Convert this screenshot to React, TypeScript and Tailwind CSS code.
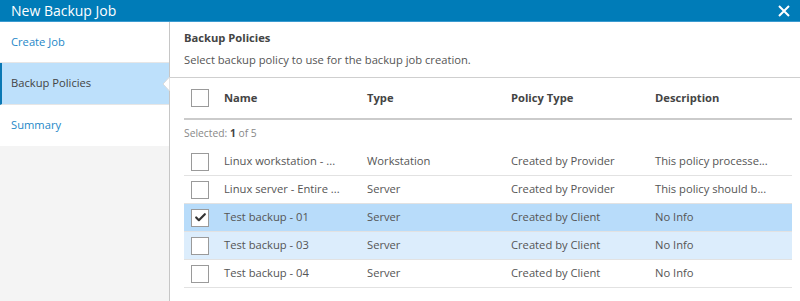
import { Check } from "lucide-react";

const rows = [
  { name: "Linux workstation - ...", type: "Workstation", policy: "Created by Provider", desc: "This policy processe...", state: "" },
  { name: "Linux server - Entire ...", type: "Server", policy: "Created by Provider", desc: "This policy should b...", state: "" },
  { name: "Test backup - 01", type: "Server", policy: "Created by Client", desc: "No Info", state: "selected" },
  { name: "Test backup - 03", type: "Server", policy: "Created by Client", desc: "No Info", state: "hover" },
  { name: "Test backup - 04", type: "Server", policy: "Created by Client", desc: "No Info", state: "" },
];

function Checkbox({ checked = false }: { checked?: boolean }) {
  return (
    <span className="flex h-[18px] w-[18px] items-center justify-center border border-[#9a9a9a] bg-white">
      {checked && <Check size={13} strokeWidth={4} className="text-[#333]" />}
    </span>
  );
}

export default function App() {
  return (
    <div className="flex h-[301px] w-[800px] flex-col overflow-hidden bg-white font-['Open_Sans',sans-serif] text-[11.2px] text-[#555]">
      <div className="flex h-[22px] shrink-0 items-center justify-between border-b border-[#3a9ad0] bg-[#007cb8] pl-[11px] pr-[10px] text-[14px] text-white">
        <span>New Backup Job</span>
        <svg width="12" height="12" viewBox="0 0 12 12" className="mt-[1px]">
          <path d="M1 1L11 11M11 1L1 11" stroke="white" strokeWidth="2" />
        </svg>
      </div>

      <div className="flex flex-1">
        <div className="relative w-[170px] shrink-0 border-r border-[#c6c6c6] bg-[#f4f4f4]">
          <div className="flex h-[41px] items-center border-b border-[#e6e6e6] bg-white pl-[11px] text-[#1e88c8]">Create Job</div>
          <div className="flex h-[42px] items-center border-b border-[#e6e6e6] border-l-2 border-l-[#0a78b4] bg-[#bde0fb] pl-[9px] text-[#444]">Backup Policies</div>
          <div className="flex h-[41px] items-center bg-white pl-[11px] text-[#1e88c8]">Summary</div>
          <svg width="8" height="14" viewBox="0 0 8 14" className="absolute right-[-1px] top-[55px]">
            <path d="M7.5 0L1 7L7.5 14Z" fill="white" />
            <path d="M7.5 0L1 7L7.5 14" fill="none" stroke="#dadada" strokeWidth="1" />
          </svg>
        </div>

        <div className="flex flex-1 flex-col">
          <div className="flex h-[56px] flex-col justify-center gap-[5px] border-b border-[#cfcfcf] pl-[14px] pb-[1px]">
            <div className="font-bold text-[#444]">Backup Policies</div>
            <div>Select backup policy to use for the backup job creation.</div>
          </div>

          <div className="pl-[14px] pr-[8px]">
            <div className="flex h-[42px] items-center border-b-2 border-[#cbcbcb] font-bold text-[#444]">
              <div className="w-[40px] pl-[7px]"><Checkbox /></div>
              <div className="w-[143px]">Name</div>
              <div className="w-[144px]">Type</div>
              <div className="w-[144px]">Policy Type</div>
              <div className="flex-1">Description</div>
            </div>
            <div className="flex h-[28px] items-center text-[10.3px] text-[#888]">
              Selected:&nbsp;<b className="text-[#444]">1</b>&nbsp;of 5
            </div>
            {rows.map((r) => (
              <div
                key={r.name}
                className={`flex h-[28px] items-center border-b border-[#e2e2e2] ${
                  r.state === "selected" ? "bg-[#b8dcfa]" : r.state === "hover" ? "bg-[#dcedfc]" : "bg-white"
                }`}
              >
                <div className="w-[40px] pl-[7px]"><Checkbox checked={r.state === "selected"} /></div>
                <div className="w-[143px]">{r.name}</div>
                <div className="w-[144px]">{r.type}</div>
                <div className="w-[144px]">{r.policy}</div>
                <div className="flex-1">{r.desc}</div>
              </div>
            ))}
          </div>
        </div>
      </div>
    </div>
  );
}
